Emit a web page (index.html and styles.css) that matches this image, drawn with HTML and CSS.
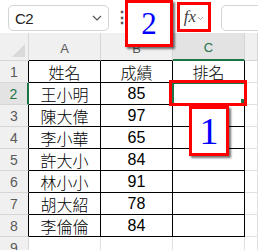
FILE: index.html
```html
<!DOCTYPE html>
<html>
<head>
<meta charset="utf-8">
<link rel="stylesheet" href="styles.css">
</head>
<body>
<div class="app">
  <div class="bar">
    <div class="namebox">
      <span class="ref">C2</span>
      <svg class="chev" width="10" height="6" viewBox="0 0 10 6"><path d="M1 1 L5 5 L9 1" fill="none" stroke="#555" stroke-width="1.2"/></svg>
    </div>
    <div class="more">⋮</div>
    <div class="fx"><span class="fxt">fx</span><svg class="fxchev" width="7" height="5" viewBox="0 0 7 5"><path d="M1 1 L3.5 3.5 L6 1" fill="none" stroke="#aaa" stroke-width="1"/></svg></div>
    <div class="formula"></div>
  </div>
  <div class="sheet">
    <div class="c hdr corner"><span class="tri"></span></div>
    <div class="c hdr colh bk">A</div>
    <div class="c hdr colh bk">B</div>
    <div class="c hdr colh selh">C</div>
    <div class="c hdr colh"></div>

    <div class="c rowh bkr">1</div>
    <div class="c d">姓名</div>
    <div class="c d">成績</div>
    <div class="c d">排名</div>
    <div class="c e"></div>

    <div class="c rowh selr">2</div>
    <div class="c d">王小明</div>
    <div class="c d">85</div>
    <div class="c d"></div>
    <div class="c e"></div>

    <div class="c rowh bkr">3</div>
    <div class="c d">陳大偉</div>
    <div class="c d">97</div>
    <div class="c d"></div>
    <div class="c e"></div>

    <div class="c rowh bkr">4</div>
    <div class="c d">李小華</div>
    <div class="c d">65</div>
    <div class="c d"></div>
    <div class="c e"></div>

    <div class="c rowh bkr">5</div>
    <div class="c d">許大小</div>
    <div class="c d">84</div>
    <div class="c d"></div>
    <div class="c e"></div>

    <div class="c rowh bkr">6</div>
    <div class="c d">林小小</div>
    <div class="c d">91</div>
    <div class="c d"></div>
    <div class="c e"></div>

    <div class="c rowh bkr">7</div>
    <div class="c d">胡大紹</div>
    <div class="c d">78</div>
    <div class="c d"></div>
    <div class="c e"></div>

    <div class="c rowh bkr">8</div>
    <div class="c d">李倫倫</div>
    <div class="c d">84</div>
    <div class="c d"></div>
    <div class="c e"></div>

    <div class="c rowh">9</div>
    <div class="c e"></div>
    <div class="c e"></div>
    <div class="c e"></div>
    <div class="c e"></div>
  </div>

  <div class="sel"><span class="handle"></span></div>
  <div class="mark mark-c2"></div>
  <div class="mark tag tag-2">2</div>
  <div class="mark tag tag-1">1</div>
</div>
</body>
</html>
```

FILE: styles.css
```css
* { box-sizing: border-box; }
html, body { margin: 0; padding: 0; background: #fff; }
body { width: 258px; height: 250px; overflow: hidden; }
.app { position: relative; width: 258px; height: 250px; overflow: hidden; font-family: "Liberation Sans", Arial, sans-serif; }

.bar { height: 33px; display: flex; align-items: flex-start; background: #fff; }
.bar > * { flex-shrink: 0; }
.namebox { margin: 5px 0 0 8px; width: 101px; height: 26px; border: 1px solid #d4d4d4; border-radius: 5px; display: flex; align-items: center; justify-content: space-between; padding: 0 6px 0 6px; }
.ref { font-size: 15px; color: #222; letter-spacing: -0.5px; }
.chev { display: block; }
.more { margin: 9px 0 0 5px; width: 10px; text-align: center; font-size: 16px; line-height: 18px; color: #555; font-weight: bold; }
.fx { margin: 2px 0 0 53px; width: 34px; height: 30px; border: 3px solid #ff0000; display: flex; align-items: center; justify-content: center; gap: 1px; background: #fff; }
.fxt { font-family: "Liberation Serif", serif; font-style: italic; font-size: 17px; color: #444; }
.fxchev { margin-top: 3px; }
.formula { margin: 5px 0 0 10px; width: 60px; height: 26px; border: 1px solid #d4d4d4; border-radius: 5px; }

.sheet { display: grid; grid-template-columns: 29px 72px 72px 72px 1fr; grid-template-rows: 28px repeat(9, 22px); }
.c { border-right: 1px solid #e1e1e1; border-bottom: 1px solid #e1e1e1; display: flex; align-items: center; justify-content: center; }
.hdr { background: #f0f0f0; border-right-color: #d6d6d6; border-bottom-color: #d6d6d6; color: #5a5a5a; font-size: 13px; padding-top: 3px; }
.corner { position: relative; }
.tri { position: absolute; right: 3px; bottom: 3px; width: 0; height: 0; border-left: 13px solid transparent; border-bottom: 13px solid #d9d9d9; }
.colh.bk { border-bottom-color: #000; }
.colh.selh { background: #e3e3e3; color: #1d7445; border-bottom: 2px solid #1d7445; }
.rowh { background: #f0f0f0; border-right-color: #d6d6d6; border-bottom-color: #d6d6d6; color: #5a5a5a; font-size: 14px; }
.rowh.bkr { border-right-color: #000; }
.rowh.selr { background: #e3e3e3; color: #1d7445; border-right: 2px solid #1d7445; }
.d { border-right-color: #000; border-bottom-color: #000; font-family: "Liberation Sans", "Noto Sans CJK TC", sans-serif; font-size: 16px; font-weight: 300; color: #000; }

.sel { position: absolute; left: 172px; top: 82px; width: 74px; height: 24px; border: 2px solid #1d7445; }
.handle { position: absolute; right: -1px; bottom: 1px; width: 4px; height: 4px; background: #1d7445; }
.mark { position: absolute; border: 3px solid #ff0000; }
.mark-c2 { left: 169px; top: 80px; width: 78px; height: 26px; }
.tag { background: #fff; color: #0000ff; font-family: "Liberation Serif", serif; display: flex; align-items: center; justify-content: center; box-shadow: 2px 2px 2px rgba(0,0,0,0.55); }
.tag-2 { left: 125px; top: 0; width: 48px; height: 47px; font-size: 31px; }
.tag-1 { left: 189px; top: 106px; width: 40px; height: 50px; font-size: 38px; }
```
